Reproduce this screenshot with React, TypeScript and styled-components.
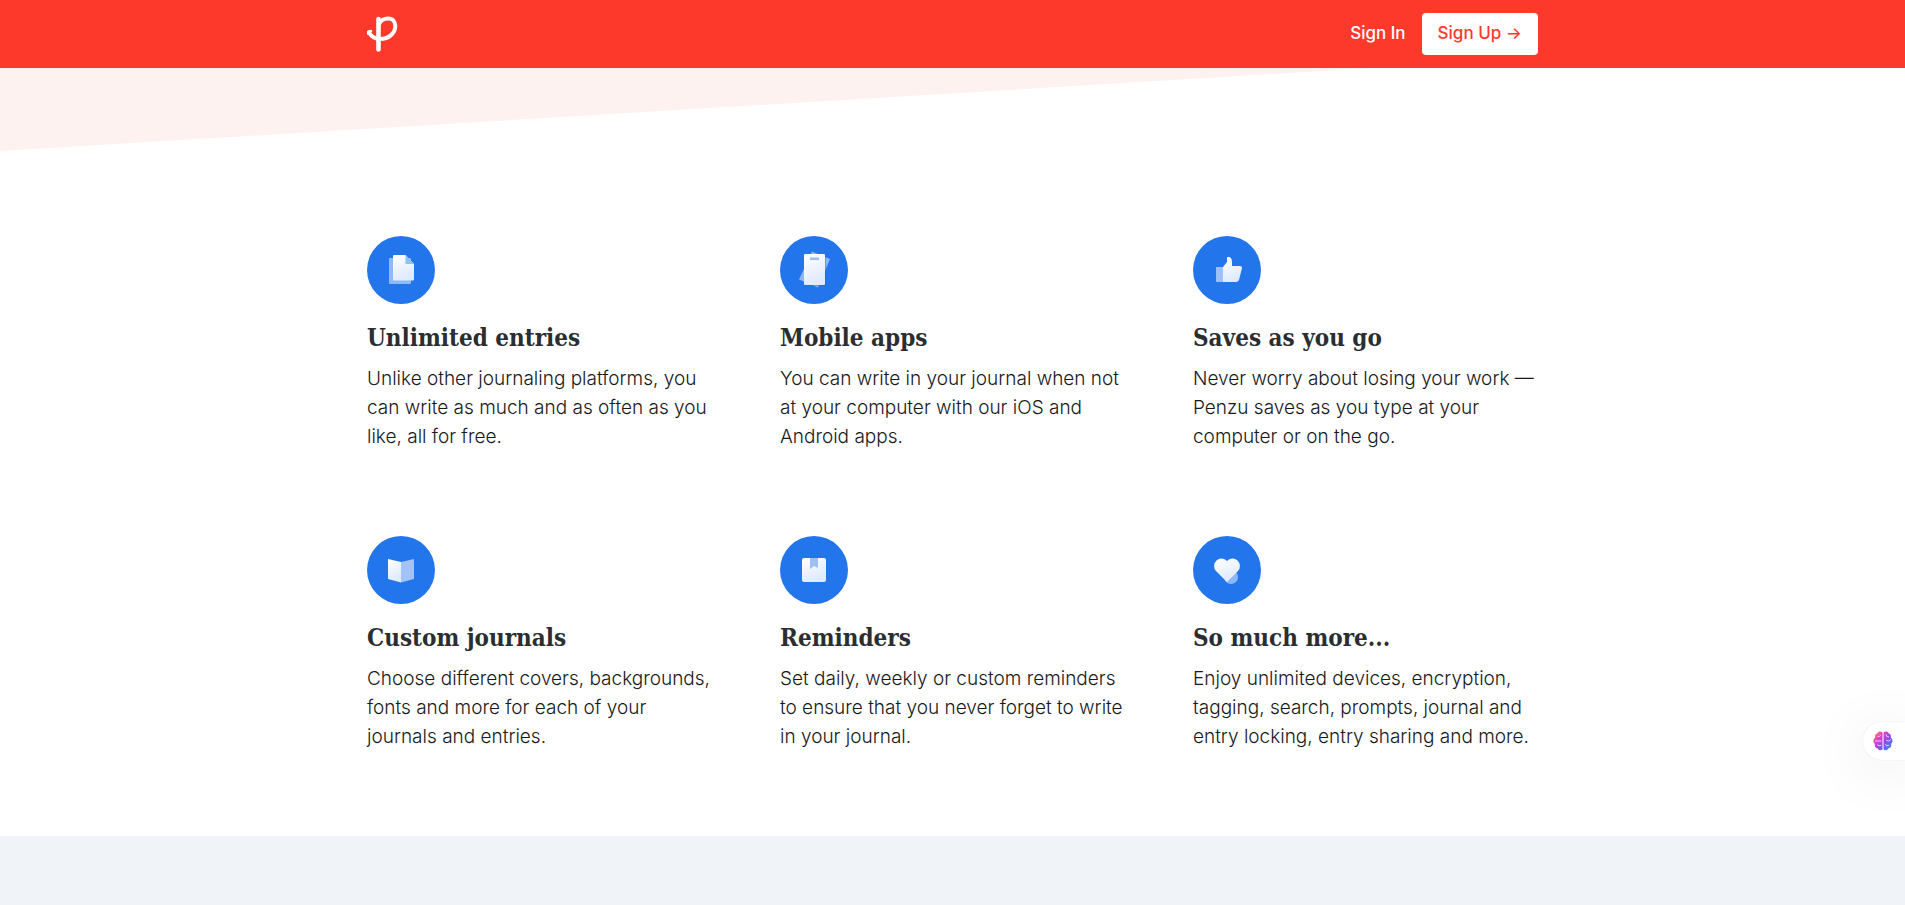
import React from 'react';
import styled, { createGlobalStyle } from 'styled-components';

const GlobalStyle = createGlobalStyle`
  *, *::before, *::after { box-sizing: border-box; }
  body {
    margin: 0;
    background: #fff;
    color: #2b2e31;
    font-family: Inter, 'Liberation Sans', sans-serif;
  }
`;

const Page = styled.div`
  display: flex;
  flex-direction: column;
  min-height: 100vh;
`;

const Container = styled.div`
  width: 100%;
  max-width: 1203px;
  margin: 0 auto;
  padding: 0 16px;
`;

const Header = styled.header`
  background: #fc392b;
`;

const Bar = styled(Container)`
  display: flex;
  align-items: center;
  justify-content: space-between;
  height: 68px;
`;

const LogoLink = styled.a`
  display: flex;
`;

const Nav = styled.nav`
  display: flex;
  align-items: center;
  gap: 16px;
  font-size: 17px;
  font-weight: 500;
  line-height: 20px;
`;

const SignIn = styled.a`
  padding-bottom: 2px;
  color: #fff;
  text-decoration: none;
`;

const SignUp = styled.button`
  display: flex;
  align-items: center;
  height: 42px;
  padding: 0 16px 2px;
  border: 0;
  border-radius: 4px;
  background: #fff;
  color: #fc392b;
  font: inherit;
  cursor: pointer;
`;

const Slope = styled.div`
  height: 83px;
  background: #fef2f0;
  clip-path: polygon(0 0, 72% 0, 0 100%);
`;

const Features = styled.main`
  padding: 85px 0;
`;

const Grid = styled(Container)`
  display: grid;
  grid-template-columns: repeat(3, 1fr);
  gap: 85px 68px;
  @media (max-width: 900px) {
    grid-template-columns: 1fr;
  }
`;

const Badge = styled.div`
  width: 68px;
  height: 68px;
  border-radius: 50%;
  background: #2275eb;
`;

const Title = styled.h2`
  margin: 16px 0 8px;
  font: bold 24px/36px 'DejaVu Serif Condensed', 'DejaVu Serif', serif;
`;

const Text = styled.p`
  margin: 0;
  color: #17191b;
  font-size: 19px;
  font-weight: 300;
  line-height: 29px;
`;

const Footer = styled.footer`
  flex: 1;
  min-height: 69px;
  background: #f0f4f9;
`;

const Assistant = styled.button`
  position: fixed;
  right: 0;
  top: 722px;
  display: flex;
  align-items: center;
  width: 42px;
  height: 38px;
  padding: 0 0 0 10px;
  border: 0;
  border-radius: 19px 0 0 19px;
  background: #fff;
  box-shadow: 0 10px 60px rgba(0, 0, 0, 0.1), 0 0 2px rgba(0, 0, 0, 0.1);
  cursor: pointer;
`;

const Logo = () => (
  <svg width="32" height="38" viewBox="0 0 32 38" fill="none" stroke="#fff" strokeWidth="4.6" strokeLinecap="round" strokeLinejoin="round" aria-hidden="true">
    <path d="M11.5 4V34.5" />
    <path d="M12 9C14 5 18 3.6 21 3.6C26 3.6 28.3 7 28.3 11C28.3 18 22 24 13 24C8 24 4 21 1.8 17.2" strokeWidth="4" />
    <path d="M1 18.5L4 16" strokeWidth="2.4" />
  </svg>
);

const Brain = () => (
  <svg width="20" height="20" viewBox="0 0 20 20" aria-hidden="true">
    <defs>
      <linearGradient id="brain" x1="0" y1="0" x2="1" y2="1">
        <stop offset="0" stopColor="#ff9a2e" />
        <stop offset="0.3" stopColor="#e83ccb" />
        <stop offset="0.6" stopColor="#8a4df0" />
        <stop offset="1" stopColor="#1e9bff" />
      </linearGradient>
    </defs>
    <path
      fill="url(#brain)"
      d="M9.5 1.5C8 0 5 .3 4.300 2.300C2.300 2.800 1.600 5 2.200 6.500C0 8 0 11.500 1.800 12.800C1.200 15.500 2.800 17.200 4.500 17.300C5.500 19.700 8.300 19.800 9.500 18.500ZM10.500 1.500C12 0 15 .3 15.700 2.300C17.700 2.800 18.400 5 17.800 6.500C20 8 20 11.500 18.200 12.800C18.800 15.500 17.200 17.200 15.500 17.300C14.500 19.700 11.700 19.800 10.500 18.500Z"
    />
    <path
      fill="none"
      stroke="#f3dcff"
      strokeWidth="0.9"
      strokeLinecap="round"
      d="M2.500 10H8M5 5.500Q6.500 6 7.500 4.500M4.500 14Q6 15.500 8 14.500M13 3.800Q13 5.800 15.500 6M13.500 9.500Q15.500 11 17.500 9M12.500 13.500Q13 15.500 15.500 14.500"
    />
  </svg>
);

const Icon = ({ name }: { name: string }) => (
  <svg width="68" height="68" viewBox="0 0 68 68" aria-hidden="true">
    <defs>
      <linearGradient id={name} x1="0" y1="0" x2="0.4" y2="1">
        <stop offset="0" stopColor="#fff" />
        <stop offset="1" stopColor="#dfeafe" />
      </linearGradient>
    </defs>
    {name === 'entries' && (
      <>
        <rect x="22" y="22" width="22" height="26" rx="1" fill="#8dbaf8" />
        <path d="M27 19h11.500l8.500 9v15.500q0 1-1 1H27q-1 0-1-1V20q0-1 1-1z" fill={`url(#${name})`} />
        <path d="M38.500 19l8.500 9h-8.500z" fill="#8dc0fb" />
      </>
    )}
    {name === 'mobile' && (
      <>
        <path d="M32 15.500l18 7.500-12 28.500-19-8z" fill="#8bb5f5" />
        <rect x="25" y="19" width="21" height="31" rx="1" fill="#1a5fc8" opacity="0.35" />
        <rect x="24" y="18" width="21" height="31" rx="1" fill={`url(#${name})`} />
        <path d="M30 21.500h9v2.500h-9z" fill="#99bdf7" />
      </>
    )}
    {name === 'saves' && (
      <>
        <path d="M23 31h7v15h-6q-1 0-1-1z" fill="#9dc0f7" />
        <path d="M30 31l4-5v-4q0-1 1-1c3 0 4 2 4 5v4h8q2 0 2 2l-3 12q-1 2-3 2H30z" fill={`url(#${name})`} />
      </>
    )}
    {name === 'journals' && (
      <>
        <path d="M21 23l13 3v20.500l-13-3.500z" fill={`url(#${name})`} />
        <path d="M47 23l-13 3v20.500l13-3.500z" fill="#a1c3f8" />
      </>
    )}
    {name === 'reminders' && (
      <>
        <rect x="22" y="22" width="24" height="24" rx="2" fill={`url(#${name})`} />
        <path d="M30 22h8v10l-4-2-4 3z" fill="#9dbff7" />
      </>
    )}
    {name === 'more' && (
      <>
        <circle cx="38" cy="41" r="7" fill="#8db7f6" />
        <path d="M34 46L23 35a7 7 0 0 1 11-10a7 7 0 0 1 11 10z" fill={`url(#${name})`} />
      </>
    )}
  </svg>
);

const features = [
  { id: 'entries', title: 'Unlimited entries', text: 'Unlike other journaling platforms, you can write as much and as often as you like, all for free.' },
  { id: 'mobile', title: 'Mobile apps', text: 'You can write in your journal when not at your computer with our iOS and Android apps.' },
  { id: 'saves', title: 'Saves as you go', text: 'Never worry about losing your work — Penzu saves as you type at your computer or on the go.' },
  { id: 'journals', title: 'Custom journals', text: 'Choose different covers, backgrounds, fonts and more for each of your journals and entries.' },
  { id: 'reminders', title: 'Reminders', text: 'Set daily, weekly or custom reminders to ensure that you never forget to write in your journal.' },
  { id: 'more', title: 'So much more...', text: 'Enjoy unlimited devices, encryption, tagging, search, prompts, journal and entry locking, entry sharing and more.' },
];

export default function App() {
  return (
    <Page>
      <GlobalStyle />
      <Header>
        <Bar>
          <LogoLink href="#" aria-label="Penzu"><Logo /></LogoLink>
          <Nav>
            <SignIn href="#">Sign In</SignIn>
            <SignUp type="button">Sign Up →</SignUp>
          </Nav>
        </Bar>
      </Header>
      <Slope />
      <Features>
        <Grid>
          {features.map((f) => (
            <article key={f.id}>
              <Badge><Icon name={f.id} /></Badge>
              <Title>{f.title}</Title>
              <Text>{f.text}</Text>
            </article>
          ))}
        </Grid>
      </Features>
      <Footer />
      <Assistant type="button" aria-label="Assistant"><Brain /></Assistant>
    </Page>
  );
}
